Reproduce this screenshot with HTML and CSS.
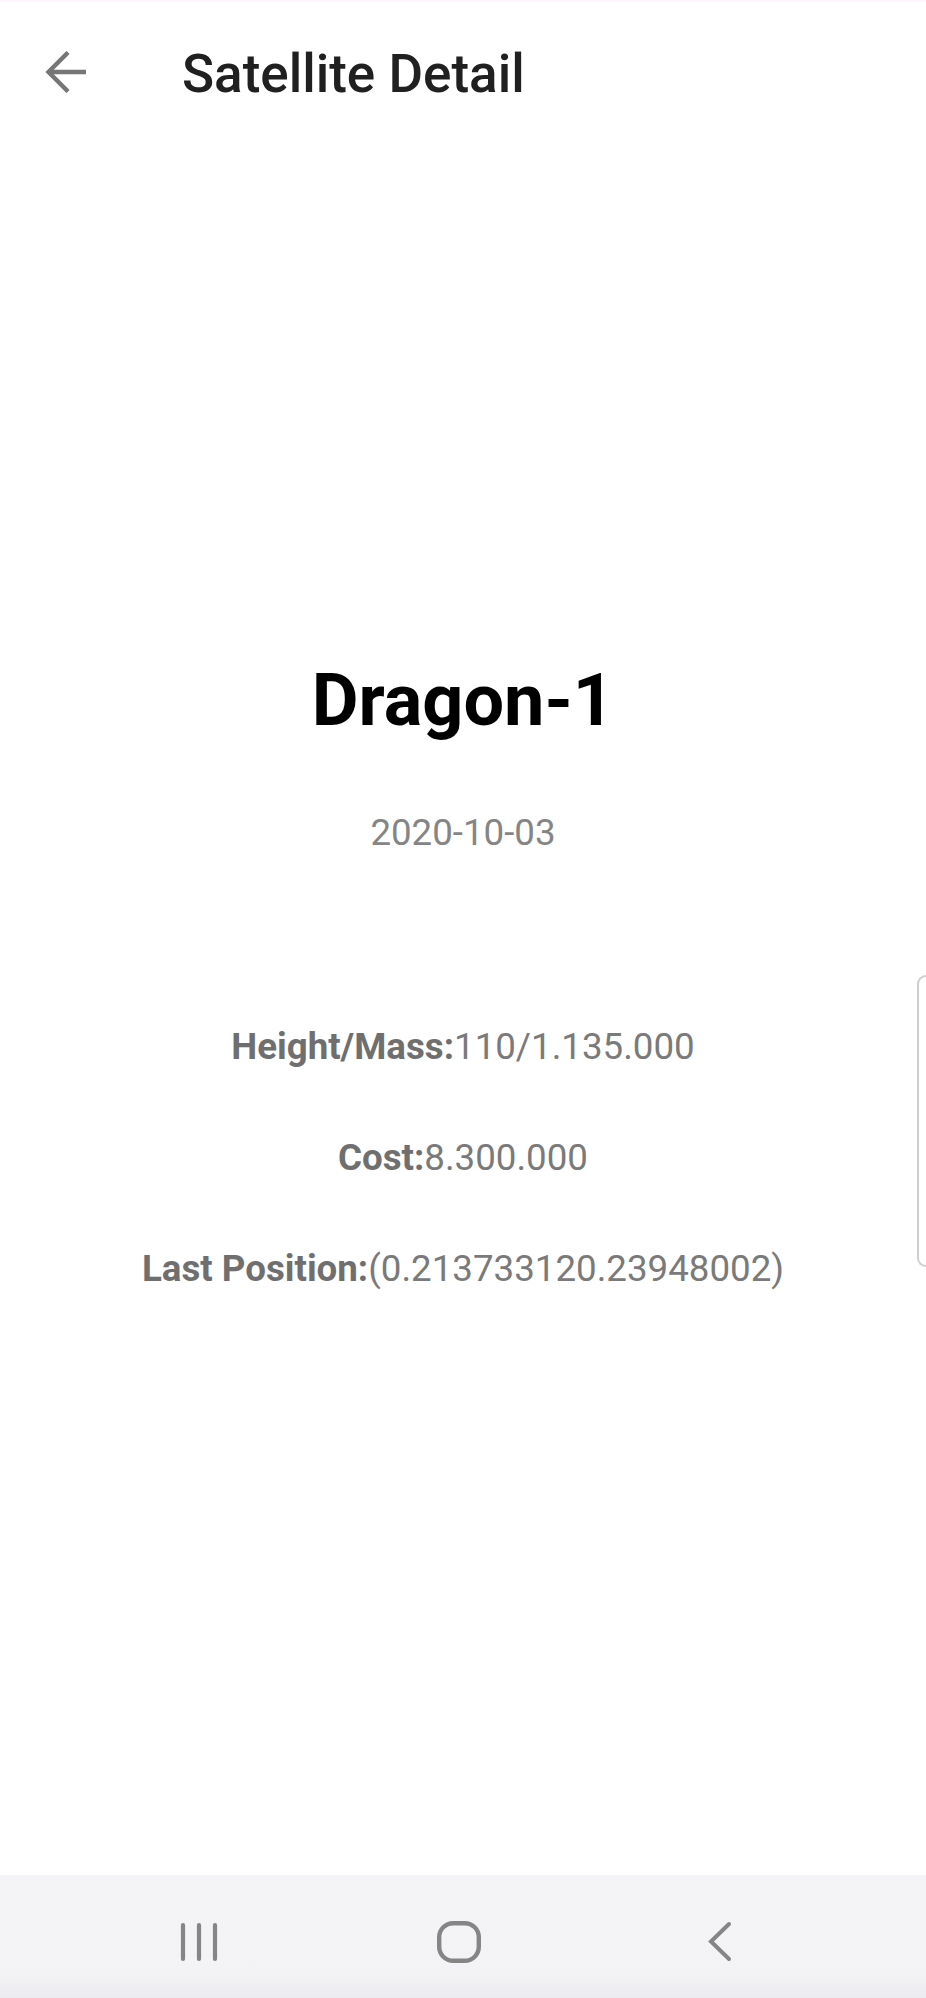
FILE: index.html
```html
<!DOCTYPE html>
<html lang="en">
<head>
<meta charset="utf-8">
<title>Satellite Detail</title>
<link rel="stylesheet" href="styles.css">
</head>
<body>
<div class="screen">
  <header class="toolbar">
    <button class="back" aria-label="Back">
      <svg width="44" height="42" viewBox="0 0 44 42" fill="none" stroke="#767676" stroke-width="4.4" stroke-linecap="butt" stroke-linejoin="miter">
        <path d="M43 21H5"/>
        <path d="M25 1.5L5.5 21L25 40.5"/>
      </svg>
    </button>
    <h1 class="title">Satellite Detail</h1>
  </header>

  <main class="content">
    <h2 class="name">Dragon-1</h2>
    <p class="date">2020-10-03</p>
    <ul class="facts">
      <li><b>Height/Mass:</b>110/1.135.000</li>
      <li><b>Cost:</b>8.300.000</li>
      <li><b>Last Position:</b>(0.213733120.23948002)</li>
    </ul>
  </main>

  <nav class="navbar">
    <span class="nav-btn">
      <svg width="40" height="42" viewBox="0 0 40 42" fill="none" stroke="#858585" stroke-width="4.2" stroke-linecap="round">
        <path d="M4 4V38"/>
        <path d="M20 4V38"/>
        <path d="M36 4V38"/>
      </svg>
    </span>
    <span class="nav-btn">
      <svg width="46" height="44" viewBox="0 0 46 44" fill="none" stroke="#858585" stroke-width="4.4">
        <rect x="3.2" y="3.2" width="39.6" height="37.6" rx="14" ry="14"/>
      </svg>
    </span>
    <span class="nav-btn">
      <svg width="28" height="42" viewBox="0 0 28 42" fill="none" stroke="#858585" stroke-width="4" stroke-linecap="round" stroke-linejoin="miter">
        <path d="M24 3L6 20.5L24 38"/>
      </svg>
    </span>
  </nav>

  <div class="edge-handle"></div>
</div>
</body>
</html>
```

FILE: styles.css
```css
* {
  box-sizing: border-box;
}

html, body {
  margin: 0;
  padding: 0;
  background: #ffffff;
}

.screen {
  position: relative;
  width: 926px;
  height: 1998px;
  display: flex;
  flex-direction: column;
  font-family: Roboto, "Liberation Sans", Arial, sans-serif;
  border-top: 2px solid #fbf5fb;
  overflow: hidden;
}

.toolbar {
  height: 144px;
  display: flex;
  align-items: center;
  padding-left: 43px;
  flex-shrink: 0;
}

.back {
  width: 44px;
  height: 42px;
  padding: 0;
  margin: -4px 0 0 0;
  border: 0;
  background: none;
  display: flex;
  align-items: center;
  justify-content: center;
}

.back svg {
  display: block;
}

.title {
  margin: 0 0 0 95px;
  font-size: 53px;
  line-height: 53px;
  font-weight: 500;
  color: #202020;
  letter-spacing: 0;
}

.content {
  flex: 1;
  display: flex;
  flex-direction: column;
  align-items: center;
  padding-top: 519px;
}

.name {
  margin: 0;
  font-size: 72px;
  line-height: 72px;
  font-weight: 700;
  color: #000000;
}

.date {
  margin: 78px 0 0;
  font-size: 36.7px;
  line-height: 36px;
  color: #858585;
}

.facts {
  list-style: none;
  margin: 178px 0 0;
  padding: 0;
  display: flex;
  flex-direction: column;
  align-items: center;
  gap: 75px;
}

.facts li {
  font-size: 36.7px;
  line-height: 36px;
  color: #7a7a7a;
  white-space: nowrap;
}

.facts b {
  font-weight: 700;
  color: #6f6f6f;
}

.navbar {
  height: 123px;
  flex-shrink: 0;
  background: linear-gradient(to bottom, #f4f3f6 0%, #f3f2f5 80%, #ebeaee 100%);
  display: grid;
  grid-template-columns: 200px 200px 200px;
  justify-content: center;
  align-items: center;
  padding: 10px 8px 0 0;
  column-gap: 60px;
}

.nav-btn {
  display: flex;
  justify-content: center;
  align-items: center;
}

.nav-btn svg {
  display: block;
}

.edge-handle {
  position: absolute;
  right: 0;
  top: 973px;
  width: 9px;
  height: 292px;
  border: 2px solid #cfcfcf;
  border-right: 0;
  border-radius: 9px 0 0 9px;
}
```
